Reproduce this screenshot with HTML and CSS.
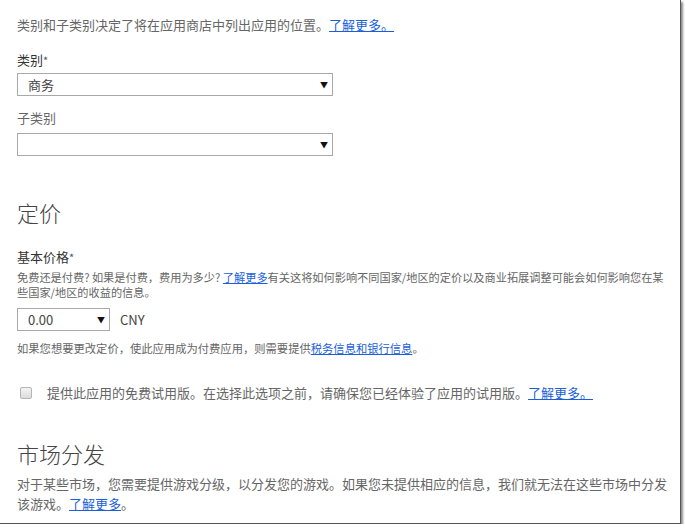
FILE: index.html
```html
<!DOCTYPE html>
<html lang="zh-CN">
<head>
    <meta charset="utf-8">
    <title>应用属性</title>
    <link rel="stylesheet" href="styles.css">
</head>
<body>
    <div class="frame">
        <div class="content">
            <p class="intro">类别和子类别决定了将在应用商店中列出应用的位置。<a href="#">了解更多。</a></p>

            <label class="field-label">类别<span class="req">*</span></label>
            <div class="select wide">
                <span class="value">商务</span>
                <span class="arrow">▼</span>
            </div>

            <label class="field-label sub">子类别</label>
            <div class="select wide second">
                <span class="value"></span>
                <span class="arrow">▼</span>
            </div>

            <h2 class="section-title pricing">定价</h2>

            <label class="field-label price-label">基本价格<span class="req">*</span></label>
            <p class="help">免费还是付费? 如果是付费，费用为多少? <a href="#">了解更多</a>有关这将如何影响不同国家/地区的定价以及商业拓展调整可能会如何影响您在某些国家/地区的收益的信息。</p>

            <div class="price-row">
                <div class="select narrow">
                    <span class="value">0.00</span>
                    <span class="arrow">▼</span>
                </div>
                <span class="currency">CNY</span>
            </div>

            <p class="note">如果您想要更改定价，使此应用成为付费应用，则需要提供<a href="#">税务信息和银行信息</a>。</p>

            <div class="trial">
                <span class="checkbox"></span>
                <span>提供此应用的免费试用版。在选择此选项之前，请确保您已经体验了应用的试用版。<a href="#">了解更多。</a></span>
            </div>

            <h2 class="section-title market">市场分发</h2>
            <p class="market-text">对于某些市场，您需要提供游戏分级，以分发您的游戏。如果您未提供相应的信息，我们就无法在这些市场中分发该游戏。<a href="#">了解更多</a>。</p>
        </div>
    </div>
</body>
</html>
```

FILE: styles.css
```css
* { margin: 0; padding: 0; box-sizing: border-box; }
body {
    background: #fff;
    font-family: "Noto Sans CJK SC", "Noto Sans", sans-serif;
    color: #666;
}
.frame {
    width: 681px;
    height: 524px;
    border-right: 1px solid #555;
    border-bottom: 1px solid #555;
    box-shadow: 2px 2px 2px rgba(0,0,0,0.45);
    background: #fff;
    overflow: hidden;
}
.content {
    padding: 15px 0 0 17px;
    width: 673px;
}
a { color: #1a5fd8; text-decoration: underline; }

.intro { font-size: 13px; line-height: 20px; }

.field-label {
    display: block;
    font-size: 13px;
    line-height: 20px;
    color: #333;
    margin-top: 15px;
}
.field-label.sub { margin-top: 12px; color: #666; }
.req { font-size: 11px; vertical-align: top; color: #555; }

.select {
    display: flex;
    align-items: center;
    justify-content: space-between;
    height: 23px;
    border: 1px solid #a9a9a9;
    background: #fff;
    padding: 0 4px 0 10px;
    font-size: 13px;
    color: #444;
    margin-top: 3px;
}
.select.wide { width: 316px; }
.select.second { margin-top: 5px; }
.select .arrow { font-size: 8px; color: #111; }

.section-title {
    font-size: 22px;
    font-weight: 300;
    line-height: 30px;
    color: #444;
}
.pricing { margin-top: 41px; }
.market { margin-top: 35px; }

.price-label { margin-top: 20px; }
.help {
    font-size: 11.2px;
    line-height: 15px;
    margin-top: 3px;
    width: 652px;
}

.price-row {
    display: flex;
    align-items: center;
    gap: 10px;
    margin-top: 8px;
}
.select.narrow { width: 93px; margin-top: 0; }
.currency { font-size: 13px; color: #444; }

.note { font-size: 11.3px; line-height: 16px; margin-top: 9px; }

.trial {
    display: flex;
    align-items: center;
    font-size: 13px;
    line-height: 20px;
    margin-top: 27px;
}
.checkbox {
    width: 12px;
    height: 12px;
    margin: 0 15px 0 3px;
    border: 1px solid #b5b5b5;
    border-radius: 2px;
    background: linear-gradient(#f4f4f4, #dcdcdc);
}

.market-text {
    font-size: 13px;
    line-height: 20px;
    margin-top: 6px;
    width: 660px;
}
```
